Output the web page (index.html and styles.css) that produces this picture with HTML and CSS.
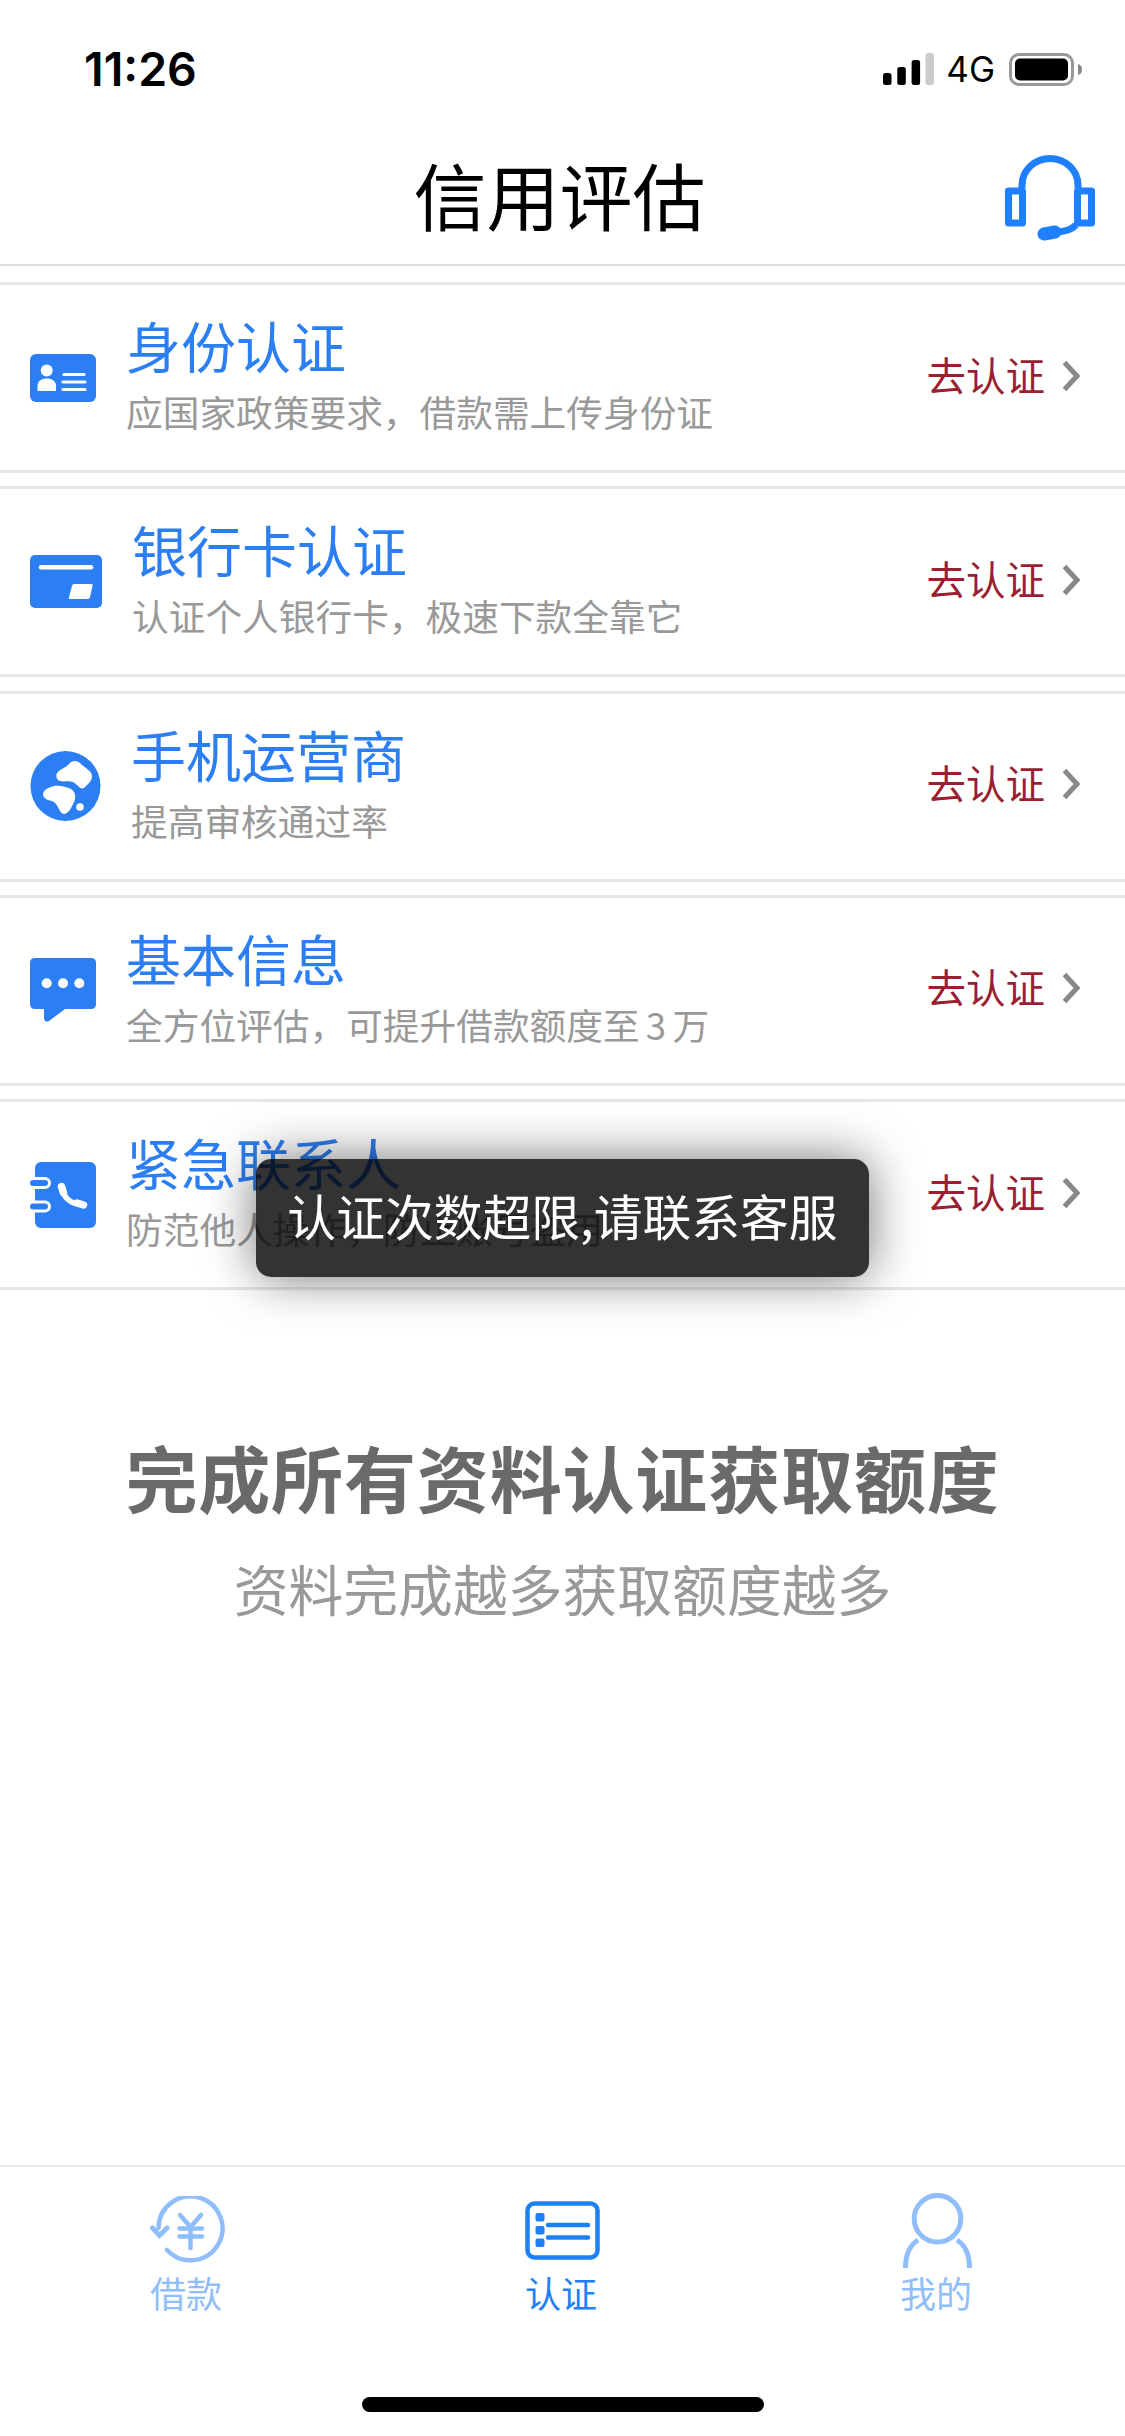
FILE: index.html
```html
<!DOCTYPE html>
<html lang="zh-CN">
<head>
<meta charset="utf-8">
<title>信用评估</title>
<link rel="stylesheet" href="styles.css">
</head>
<body>
<div class="app">
  <div class="status">
    <span class="time">11:26</span>
    <div class="status-right">
      <svg class="signal" width="51" height="32" viewBox="0 0 51 32"><rect x="0" y="20" width="8.500" height="12" rx="2.500" fill="#000"/><rect x="14.300" y="14" width="8.500" height="18" rx="2.500" fill="#000"/><rect x="28.600" y="7" width="8.500" height="25" rx="2.500" fill="#000"/><rect x="42.500" y="0" width="8.500" height="32" rx="2.500" fill="#ccc"/></svg>
      <span class="net">4G</span>
      <svg class="battery" width="73" height="33" viewBox="0 0 73 33"><rect x="1.500" y="1.500" width="62" height="30" rx="8.500" fill="none" stroke="#999" stroke-width="3"/><rect x="6" y="5.500" width="53" height="22" rx="5" fill="#000"/><path d="M69 11c2.500.5 4 2.500 4 5.500s-1.500 5-4 5.500z" fill="#888"/></svg>
    </div>
  </div>

  <header class="nav">
    <h1 class="nav-title">信用评估</h1>
    <svg class="headset" width="90" height="86" viewBox="0 0 90 86" fill="none" stroke="#1e80ff" stroke-width="7">
      <path d="M17 33V30a28 26.500 0 0 1 56 0V33"/>
      <rect x="3.500" y="36" width="14" height="32" stroke-linejoin="round"/>
      <rect x="72.500" y="36" width="14" height="32" stroke-linejoin="round"/>
      <path d="M71 70C66 75 61 76 52 77"/>
      <path d="M39 79L50 77" stroke-width="13" stroke-linecap="round"/>
    </svg>
  </header>

  <main class="list">
    <section class="row">
      <svg class="ico" width="66" height="48" viewBox="0 0 66 48"><rect width="66" height="48" rx="6" fill="#2b7ff2"/><circle cx="16.700" cy="16.500" r="6" fill="#fff"/><path d="M7.500 37V32c0-5 4-7.500 9.200-7.500S26 27 26 32v5z" fill="#fff"/><path d="M34 20.500H54M33 28H55M33 35.500H55" stroke="#fff" stroke-width="3.200" stroke-linecap="round"/></svg>
      <div class="text"><div class="title">身份认证</div><div class="sub">应国家政策要求，借款需上传身份证</div></div>
      <div class="go">去认证</div>
      <svg class="chev" width="18" height="32" viewBox="0 0 18 32"><path d="M2.500 2.500L15 16L2.500 29.500" fill="none" stroke="#888" stroke-width="5"/></svg>
    </section>
    <section class="row">
      <svg class="ico" width="72" height="53" viewBox="0 0 72 53"><rect width="72" height="53" rx="5" fill="#2b7ff2"/><path d="M11 12.300H61" stroke="#fff" stroke-width="4.500" stroke-linecap="round"/><path d="M44 29H61.500Q63 29 62.500 31L60 42Q59.500 44 58 44H40Q38 44 39 42L42 31Q42.500 29 44 29Z" fill="#fff"/></svg>
      <div class="text"><div class="title">银行卡认证</div><div class="sub">认证个人银行卡，极速下款全靠它</div></div>
      <div class="go">去认证</div>
      <svg class="chev" width="18" height="32" viewBox="0 0 18 32"><path d="M2.500 2.500L15 16L2.500 29.500" fill="none" stroke="#888" stroke-width="5"/></svg>
    </section>
    <section class="row">
      <svg class="ico" width="71" height="70" viewBox="0 0 71 70"><circle cx="35.500" cy="35" r="35" fill="#2b7ff2"/><path d="M27 22C30 18 35 17 38 14C42 9 47 9 51 13C55 17 62 20 62 25C62 30 58 33 54 37C50 39 47 33 43 31C38 29 32 32 28 29C26 27 26 24 27 22Z" fill="#fff"/><path d="M13 43C14 38 20 36 24 35C30 34 36 36 41 38C46 41 46 47 44 51C42 55 40 61 35 63C31 64 29 57 26 53C23 49 19 50 16 48C14 47 13 45 13 43Z" fill="#fff"/><circle cx="50" cy="56" r="3.800" fill="#fff"/></svg>
      <div class="text"><div class="title">手机运营商</div><div class="sub">提高审核通过率</div></div>
      <div class="go">去认证</div>
      <svg class="chev" width="18" height="32" viewBox="0 0 18 32"><path d="M2.500 2.500L15 16L2.500 29.500" fill="none" stroke="#888" stroke-width="5"/></svg>
    </section>
    <section class="row">
      <svg class="ico" width="66" height="64" viewBox="0 0 66 64"><path d="M5 0H61Q66 0 66 5V46Q66 51 61 51H35L19 63Q14 65 14 59V51H5Q0 51 0 46V5Q0 0 5 0Z" fill="#2b7ff2"/><circle cx="16.700" cy="25.300" r="5" fill="#fff"/><circle cx="33" cy="25.300" r="5" fill="#fff"/><circle cx="49.300" cy="25.300" r="5" fill="#fff"/></svg>
      <div class="text"><div class="title">基本信息</div><div class="sub">全方位评估，可提升借款额度至 3 万</div></div>
      <div class="go">去认证</div>
      <svg class="chev" width="18" height="32" viewBox="0 0 18 32"><path d="M2.500 2.500L15 16L2.500 29.500" fill="none" stroke="#888" stroke-width="5"/></svg>
    </section>
    <section class="row">
      <svg class="ico" width="66" height="66" viewBox="0 0 66 66"><rect x="5" width="61" height="66" rx="6" fill="#2b7ff2"/><path d="M3 21H15M3 44.500H15" stroke="#fff" stroke-width="12" stroke-linecap="round"/><path d="M3 21H15M3 44.500H15" stroke="#2b7ff2" stroke-width="6" stroke-linecap="round"/><path d="M32.500 27C33 35 41 42 50 42" fill="none" stroke="#fff" stroke-width="5.500"/><path d="M31.500 24.500L33.500 31M47 41L53.500 43" stroke="#fff" stroke-width="7.500" stroke-linecap="round"/></svg>
      <div class="text"><div class="title">紧急联系人</div><div class="sub">防范他人操作，防止账号盗用</div></div>
      <div class="go">去认证</div>
      <svg class="chev" width="18" height="32" viewBox="0 0 18 32"><path d="M2.500 2.500L15 16L2.500 29.500" fill="none" stroke="#888" stroke-width="5"/></svg>
    </section>
  </main>

  <div class="promo">
    <h2 class="promo-title">完成所有资料认证获取额度</h2>
    <p class="promo-sub">资料完成越多获取额度越多</p>
  </div>

  <nav class="tabbar">
    <div class="tabs">
      <div class="tab">
        <div class="tab-ico"><svg width="75" height="69" viewBox="0 0 75 69" fill="none" stroke="#90befb" stroke-width="4.500" stroke-linecap="round"><path d="M8.500 32A32 32 0 1 1 17 54"/><path d="M2.500 32L9.500 39.500L17 32" stroke-width="5"/><path d="M30 19L40.500 31L51 19M29.500 32.500H52M29.500 40.500H52M40.500 31V52"/></svg></div>
        <span class="tab-label">借款</span>
      </div>
      <div class="tab tab-on">
        <div class="tab-ico"><svg width="75" height="59" viewBox="0 0 75 59" fill="none" stroke="#1e80f5" stroke-width="4.500" stroke-linecap="round"><rect x="2.500" y="2.500" width="70" height="54" rx="7"/><path d="M23 24H63M23 36.500H63"/><rect x="10.500" y="12" width="9" height="8.500" rx="2" fill="#1e80f5" stroke="none"/><rect x="10.500" y="25" width="9" height="8.500" rx="2" fill="#1e80f5" stroke="none"/><rect x="10.500" y="37.500" width="9" height="8.500" rx="2" fill="#1e80f5" stroke="none"/></svg></div>
        <span class="tab-label">认证</span>
      </div>
      <div class="tab">
        <div class="tab-ico"><svg width="69" height="75" viewBox="0 0 69 75" fill="none" stroke="#90befb" stroke-width="5"><circle cx="34.500" cy="25.700" r="23.300"/><path d="M15 47C7 52 2.500 62 2.500 75M54 47C62 52 66.500 62 66.500 75"/></svg></div>
        <span class="tab-label">我的</span>
      </div>
    </div>
    <div class="home"></div>
  </nav>

  <div class="toast">认证次数超限,请联系客服</div>
</div>
</body>
</html>
```
FILE: styles.css
```css
* { box-sizing: border-box; }
html, body { margin: 0; padding: 0; background: #fff; }
body { font-family: "Noto Sans CJK SC", "Noto Sans", sans-serif; }
.app { position: relative; width: 1125px; height: 2436px; overflow: hidden; display: flex; flex-direction: column; background: #fff; }

.status { height: 132px; padding: 46px 43px 0 84px; display: flex; justify-content: space-between; align-items: flex-start; }
.time { font-family: Inter, "Liberation Sans", sans-serif; font-weight: 600; font-size: 46.500px; line-height: 46px; color: #000; }
.status-right { display: flex; align-items: center; height: 46px; }
.signal { margin-right: 12px; }
.net { font-family: Inter, "Liberation Sans", sans-serif; font-size: 35px; line-height: 46px; color: #000; margin-right: 14px; }

.nav { height: 134px; border-bottom: 2px solid #ddd; display: grid; grid-template-columns: 1fr auto 1fr; align-items: center; padding-right: 30px; }
.nav-title { grid-column: 2; margin: 0 0 10px; font-size: 73px; font-weight: 400; line-height: 100px; color: #000; padding-left: 24px; }
.headset { grid-column: 3; justify-self: end; }

.list { margin-top: 16px; display: flex; flex-direction: column; gap: 13.300px; }
.row { height: 191px; border-top: 3px solid #e6e6e6; border-bottom: 3px solid #e6e6e6; padding: 0 45px 0 30px; display: flex; align-items: center; }
.ico { flex: none; margin-right: 30px; }
.text { flex: 1; min-width: 0; padding-bottom: 5px; }
.title { font-size: 55px; line-height: 72px; color: #2b7ff2; }
.sub { font-size: 36.700px; line-height: 62px; color: #999; white-space: nowrap; word-spacing: -2px; }
.go { font-size: 39.500px; line-height: 50px; color: #9a1f33; margin-right: 17px; padding-bottom: 8px; }
.chev { flex: none; margin-bottom: 4px; }

.promo { margin-top: 136px; text-align: center; }
.promo-title { margin: 0; font-size: 72px; font-weight: 700; line-height: 100px; color: #6a6a6a; letter-spacing: 0.850px; }
.promo-sub { margin: 25px 0 0; font-size: 54.800px; line-height: 72px; color: #999; }

.tabbar { margin-top: auto; border-top: 2px solid #e8e8e8; height: 271px; display: flex; flex-direction: column; }
.tabs { display: grid; grid-template-columns: repeat(3, 1fr); padding-top: 25px; }
.tab { display: flex; flex-direction: column; align-items: center; color: #90befb; }
.tab-on { color: #2080f5; }
.tab-ico { height: 76px; display: flex; align-items: center; }
.tab-label { margin-top: 6px; padding-right: 3px; font-size: 36px; line-height: 36px; }
.home { width: 402px; height: 15px; border-radius: 8px; background: #000; margin: 87px auto 0; }

.toast { position: absolute; left: 256px; top: 1159px; width: 613px; height: 118px; border-radius: 15px; background: rgba(0, 0, 0, .8); box-shadow: 0 0 50px rgba(0, 0, 0, .55); color: #fff; font-size: 48.800px; line-height: 112px; text-align: center; white-space: nowrap; }
```
